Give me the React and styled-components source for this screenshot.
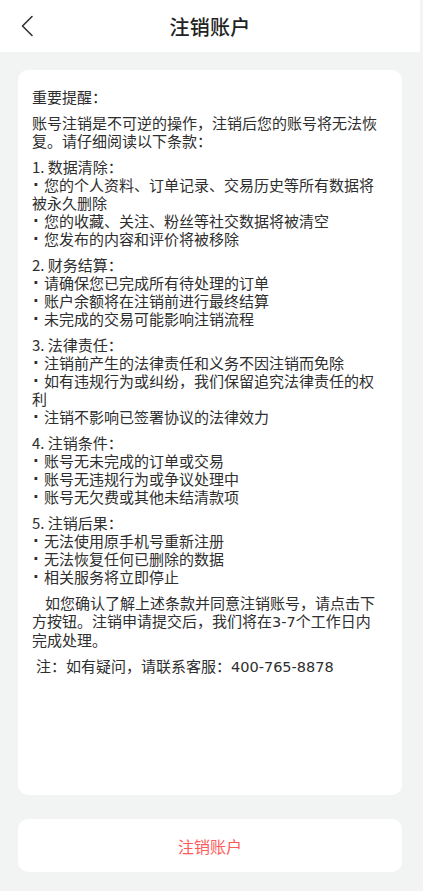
import React from "react";
import styled, { createGlobalStyle } from "styled-components";

const GlobalStyle = createGlobalStyle`
  html, body {
    margin: 0;
    padding: 0;
    background: #f2f3f3;
  }
  body {
    font-family: "Noto Sans CJK SC", "Noto Sans", sans-serif;
  }
`;

const sections = [
  {
    title: "1. 数据清除：",
    items: [
      "您的个人资料、订单记录、交易历史等所有数据将被永久删除",
      "您的收藏、关注、粉丝等社交数据将被清空",
      "您发布的内容和评价将被移除",
    ],
  },
  {
    title: "2. 财务结算：",
    items: [
      "请确保您已完成所有待处理的订单",
      "账户余额将在注销前进行最终结算",
      "未完成的交易可能影响注销流程",
    ],
  },
  {
    title: "3. 法律责任：",
    items: [
      "注销前产生的法律责任和义务不因注销而免除",
      "如有违规行为或纠纷，我们保留追究法律责任的权利",
      "注销不影响已签署协议的法律效力",
    ],
  },
  {
    title: "4. 注销条件：",
    items: [
      "账号无未完成的订单或交易",
      "账号无违规行为或争议处理中",
      "账号无欠费或其他未结清款项",
    ],
  },
  {
    title: "5. 注销后果：",
    items: [
      "无法使用原手机号重新注册",
      "无法恢复任何已删除的数据",
      "相关服务将立即停止",
    ],
  },
];

const App = () => {
  return (
    <Page>
      <GlobalStyle />
      <Header>
        <BackButton aria-label="返回">
          <svg width="14" height="22" viewBox="0 0 14 22" fill="none">
            <path
              d="M12 1.5L2.5 11L12 20.5"
              stroke="#333"
              strokeWidth="1.6"
              strokeLinecap="round"
              strokeLinejoin="round"
            />
          </svg>
        </BackButton>
        <Title>注销账户</Title>
      </Header>

      <Body>
        <Card>
          <Para>重要提醒：</Para>
          <Para>账号注销是不可逆的操作，注销后您的账号将无法恢复。请仔细阅读以下条款：</Para>
          {sections.map((s) => (
            <Para key={s.title}>
              {s.title}
              {s.items.map((it) => (
                <Line key={it}>
                  <Bullet>·</Bullet>
                  {it}
                </Line>
              ))}
            </Para>
          ))}
          <Para $indent="13px">
            如您确认了解上述条款并同意注销账号，请点击下方按钮。注销申请提交后，我们将在<Num>3-7</Num>个工作日内完成处理。
          </Para>
          <Para $pad="4px">
            注：如有疑问，请联系客服：<Num>400-765-8878</Num>
          </Para>
        </Card>
        <DangerButton>注销账户</DangerButton>
      </Body>
    </Page>
  );
};

const Page = styled.div`
  width: 420px;
  height: 891px;
  display: flex;
  flex-direction: column;
  background: #f2f3f3;
`;

const Header = styled.div`
  height: 52px;
  background: #fff;
  display: flex;
  align-items: center;
  justify-content: center;
  position: relative;
  flex-shrink: 0;
`;

const BackButton = styled.button`
  position: absolute;
  left: 16px;
  top: 15px;
  padding: 0 4px;
  border: none;
  background: none;
  display: flex;
`;

const Title = styled.h1`
  margin: 0;
  font-size: 20px;
  font-weight: 500;
  color: #222;
  letter-spacing: 0.2px;
`;

const Body = styled.div`
  flex: 1;
  display: flex;
  flex-direction: column;
  gap: 24px;
  padding: 18px 18px 19px;
  min-height: 0;
`;

const Card = styled.div`
  flex: 1;
  background: #fff;
  border-radius: 10px;
  padding: 18px 18px 18px 14px;
  color: #2e2e2e;
  font-size: 15px;
  line-height: 18px;
`;

const Para = styled.div`
  margin-bottom: 8px;
  text-indent: ${(p) => p.$indent || "0"};
  padding-left: ${(p) => p.$pad || "0"};
`;

const Line = styled.div`
  height: auto;
`;

const Bullet = styled.span`
  display: inline-block;
  width: 12px;
  height: 18px;
  line-height: 18px;
  vertical-align: top;
  padding-left: 1px;
  box-sizing: border-box;
  font-family: "DejaVu Sans", sans-serif;
  font-weight: 700;
`;

const Num = styled.span`
  font-family: "DejaVu Sans", "Noto Sans", sans-serif;
  font-size: 14.5px;
  line-height: 18px;
  vertical-align: baseline;
`;

const DangerButton = styled.button`
  height: 53px;
  flex-shrink: 0;
  border: none;
  border-radius: 10px;
  background: #fff;
  color: #ff5a5a;
  font-family: inherit;
  font-size: 16px;
`;

export default App;
